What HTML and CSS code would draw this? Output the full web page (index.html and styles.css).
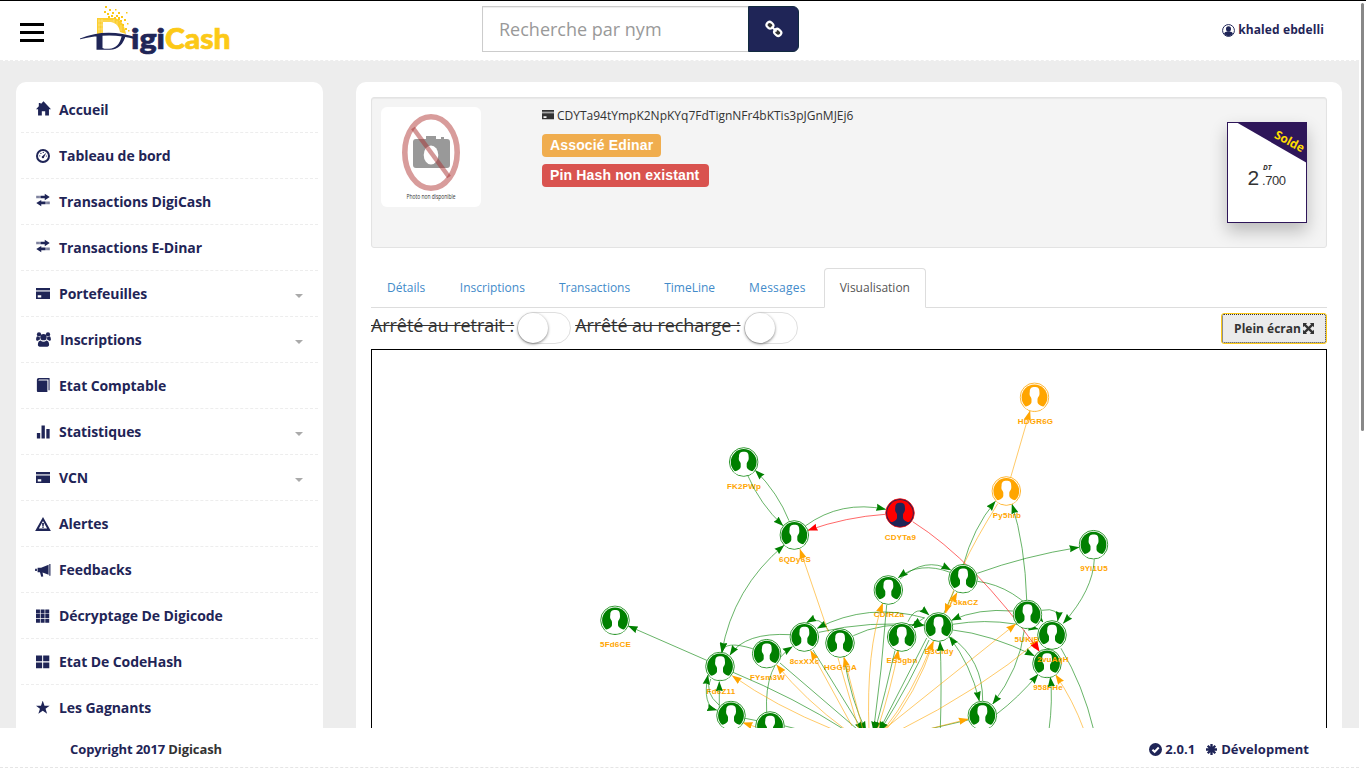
FILE: index.html
```html
<!DOCTYPE html>
<html lang="fr">
<head>
<meta charset="utf-8">
<title>DigiCash</title>
<link rel="stylesheet" href="styles.css">
</head>
<body>
<svg class="defs" width="0" height="0" aria-hidden="true">
  <symbol id="i-home" viewBox="0 0 16 16"><path d="M8 .3 16 8.700H13.800v6.800H9.800v-4.500H6.200v4.500H2.200V8.700H0L3 5.600V2h2v1.500z"/></symbol>
  <symbol id="i-dash" viewBox="0 0 16 16"><path fill-rule="evenodd" d="M8 0a8 8 0 1 0 0 16A8 8 0 0 0 8 0zm0 2.300a5.700 5.700 0 1 1 0 11.400A5.700 5.700 0 0 1 8 2.300z"/><path d="M11.800 4.200 9.300 9.200a1.400 1.400 0 1 1-1.800-1.300z"/><circle cx="4.300" cy="7.800" r=".7"/><circle cx="5.600" cy="5" r=".7"/><circle cx="8.300" cy="3.900" r=".7"/><circle cx="11.900" cy="8" r=".7"/></symbol>
  <symbol id="i-transfer" viewBox="0 0 16 16"><path d="M5 3h5V.8L15.700 4.500 10 8.200V6H5zM2.800 3h1.200v3H2.800zM.6 3h1.200v3H.6zM11 9.800H6V8L.3 11.400 6 15v-2.200h5zM12 9.800h1.200v3H12zM14.200 9.800h1.200v3h-1.200z"/></symbol>
  <symbol id="i-card" viewBox="0 0 16 16"><path fill-rule="evenodd" d="M0 1.200h16v2.300H0zM0 5.500h16v8.300H0zM2 9.500v2.600h4V9.500z"/><path opacity=".4" d="M0 3.500h16v2H0z"/></symbol>
  <symbol id="i-users" viewBox="0 0 16 16"><circle cx="8" cy="5.500" r="3.400"/><circle cx="3.200" cy="2.600" r="2.300"/><circle cx="12.800" cy="2.600" r="2.300"/><path d="M5 9a4 4 0 0 0 6 0c2 .3 3 2 3 4.700 0 1.200-.8 2-2 2H4c-1.200 0-2-.8-2-2C2 11 3 9.300 5 9zM.1 8.200c0-2 .5-3.600 1.600-3.600.8.600 1.600.8 2.400.600-.2 1.200.1 2.100.7 2.900-1.200 0-2 .4-2.700 1.200C1 9.300.1 9.200.1 8.200zM15.900 8.200c0-2-.5-3.600-1.600-3.600-.8.600-1.600.8-2.400.600.2 1.200-.1 2.100-.7 2.900 1.200 0 2 .4 2.700 1.200 1.100 0 2-.1 2-1.100z"/></symbol>
  <symbol id="i-book" viewBox="0 0 16 16"><path d="M3 0h12.500v14h-1.200V1.600H3.600L2.500 2.800h10.500V16H2.500C1.500 16 1 15.400 1 14.500V2.300C1 1 1.800 0 3 0z"/></symbol>
  <symbol id="i-stats" viewBox="0 0 16 16"><path d="M1 9h3.800v6.500H1zM6.300.500h3.800v15H6.300zM11.800 4.500h3.800v11h-3.800z"/></symbol>
  <symbol id="i-alert" viewBox="0 0 18 16"><path fill-rule="evenodd" d="M9 0l9 16H0zM9 4.700 4.300 13h9.400z"/><path d="M7.900 6.800h2.200l-.3 3.500H8.200zM8 10.900h2v1.400H8z"/></symbol>
  <symbol id="i-horn" viewBox="0 0 18 16"><path d="M17.500 1v13.500h-1.300V1zM15.400 2v11.500L8.500 10.800l.8 4.500-2.300.5L5.500 10.500H2.800V5.500h4zM0 6.500h2v2.600H0z"/></symbol>
  <symbol id="i-th" viewBox="0 0 16 16"><path d="M0 .5h4.500V5H0zM5.300.500h4.500V5H5.300zM10.600.500h4.500V5h-4.500zM0 5.800h4.500v4.500H0zM5.300 5.800h4.500v4.500H5.300zM10.600 5.800h4.500v4.500h-4.500zM0 11.100h4.500v4.500H0zM5.300 11.100h4.500v4.500H5.300zM10.600 11.100h4.500v4.500h-4.500z"/></symbol>
  <symbol id="i-th2" viewBox="0 0 16 16"><path d="M0 .5h7V7H0zM8.200.500h7V7h-7zM0 8.500h7V15H0zM8.200 8.500h7V15h-7z"/></symbol>
  <symbol id="i-star" viewBox="0 0 16 16"><path d="M7.700-.5 9.700 5.400h5.900l-4.700 3.500 1.800 5.800-5-3.500-5 3.500 1.800-5.800L-.2 5.400h5.900z"/></symbol>

  <symbol id="n-head" viewBox="-15 -15 30 30">
    <circle r="14.300" fill="var(--bg,#fff)" stroke="currentColor" stroke-width=".8"/>
    <circle r="12.900" fill="currentColor"/>
    <path fill="var(--bg,#fff)" d="M-4.700-5.500C-4.700-9-3-10.200.2-10.200S5-9 4.900-5.500C5.200-3.500 4.900-2 4.300-1 3.600 0 3.200.6 3 1.600V5C3.300 7 5 7.800 7.600 9L10 9.500C7 14.500-7 14.500-10 9.500L-7.600 9C-5 7.800-3.300 7-3 5V1.600C-3.200.6-3.600 0-4.300-1-4.900-2-5.100-3.500-4.700-5.500z"/>
  </symbol>
</svg>

<div class="page">
  <div class="app">
    <header class="topbar">
      <div class="burger"><span></span><span></span><span></span></div>
      <svg class="logo" viewBox="0 0 152 52" width="152" height="52">
        <g fill="#fcc917">
          <path d="M17 13h17c6 1 10 5 12 16l-6-2c-1-6-4-9-9-10h-8v11l-6 2z" opacity=".9"/>
          <path d="M25 1h2v2h-2zM29 4h2v2h-2zM24 6h2v2h-2zM27 8h2v2h-2zM32 7h2v2h-2zM35 4h1.500v1.500H35zM38 7h2v2h-2zM36 10h2v2h-2zM41 11h2v2h-2zM31 10h2v2h-2zM46 7h1.500v1.500H46zM40 15h2v2h-2zM44 14h2v2h-2zM42 19h2v2h-2zM47 18h1.500v1.500H47zM45 23h2v2h-2zM48 25h1.500v1.500H48zM34 12h2v2h-2zM38 12h2v3h-2zM28 11h2v2h-2z"/>
        </g>
        <path d="M19 14v14M22 14v14M34 14v4M37 16v5M41 20v6M18 16h16M18 20h5M18 24h5" stroke="#fff" stroke-width=".5" opacity=".6"/>
        <path fill="#1f2557" d="M0 33.500C18 26 37 26 57 32.500L56 34.500C37 28.500 18 30 0 34.200zM16.500 29.500h6V43c2 1 5 1 9 .5 6-1.500 9-6 10.500-14h4C43.500 39.500 38 44.700 30 44.700H16.500z"/>
        <text class="logo-a" x="51" y="44" textLength="34" lengthAdjust="spacingAndGlyphs">igi</text>
        <text class="logo-b" x="85" y="44" textLength="65.500" lengthAdjust="spacingAndGlyphs">Cash</text>
      </svg>
      <div class="search">
        <div class="search-input">Recherche par nym</div>
        <div class="search-btn"><svg width="18" height="18" viewBox="0 0 18 18" fill="none" stroke="#fff" stroke-width="2.200"><rect x="1.600" y="2.200" width="7" height="6" rx="3" transform="rotate(40 5 5)"/><rect x="9" y="9.400" width="7.400" height="6" rx="3" transform="rotate(40 12.700 12.400)"/><path d="M6.500 6.500l5 5" stroke-width="1.800"/></svg></div>
      </div>
      <div class="user"><svg width="13" height="13" viewBox="0 0 16 16"><circle cx="8" cy="8" r="7.300" fill="none" stroke="currentColor" stroke-width="1.200"/><circle cx="8" cy="6" r="3.100"/><path d="M2.500 12c.6-2 2.500-2.300 4.300-3h2.400c1.800.700 3.700 1 4.300 3A7.200 7.200 0 0 1 8 15a7.200 7.200 0 0 1-5.500-3z"/></svg>khaled ebdelli</div>
    </header>

    <div class="body">
      <nav class="side">
        <div class="item"><svg class="wide"><use href="#i-home"/></svg>Accueil</div>
        <div class="item"><svg><use href="#i-dash"/></svg>Tableau de bord</div>
        <div class="item"><svg class="up"><use href="#i-transfer"/></svg>Transactions DigiCash</div>
        <div class="item"><svg class="up"><use href="#i-transfer"/></svg>Transactions E-Dinar</div>
        <div class="item"><svg><use href="#i-card"/></svg>Portefeuilles<i class="caret"></i></div>
        <div class="item"><svg class="users"><use href="#i-users"/></svg>Inscriptions<i class="caret"></i></div>
        <div class="item"><svg class="book"><use href="#i-book"/></svg>Etat Comptable</div>
        <div class="item"><svg><use href="#i-stats"/></svg>Statistiques<i class="caret"></i></div>
        <div class="item"><svg><use href="#i-card"/></svg>VCN<i class="caret"></i></div>
        <div class="item"><svg class="xl"><use href="#i-alert"/></svg>Alertes</div>
        <div class="item"><svg class="xl"><use href="#i-horn"/></svg>Feedbacks</div>
        <div class="item"><svg><use href="#i-th"/></svg>Décryptage De Digicode</div>
        <div class="item"><svg><use href="#i-th2"/></svg>Etat De CodeHash</div>
        <div class="item"><svg><use href="#i-star"/></svg>Les Gagnants</div>
      </nav>

      <main class="panel">
        <section class="well">
          <svg class="photo" width="100" height="100" viewBox="0 0 100 100">
            <rect width="100" height="100" rx="6" fill="#fff"/>
            <path fill="#999" d="M35 32h10v-3h10v3h5v-2h3v2h3a3 3 0 0 1 3 3v23a3 3 0 0 1-3 3H35a3 3 0 0 1-3-3V35a3 3 0 0 1 3-3z"/>
            <ellipse cx="50" cy="48" rx="7.300" ry="9.500" fill="#fff"/>
            <ellipse cx="50" cy="45.500" rx="26.200" ry="35.800" fill="none" stroke="#d89c9b" stroke-width="5.600"/>
            <path d="M32 21l36 49" stroke="#a83232" stroke-width="4.600" opacity=".5"/>
            <text class="photo-t" x="50" y="92" text-anchor="middle" textLength="49" lengthAdjust="spacingAndGlyphs">Photo non disponible</text>
          </svg>
          <div class="info">
            <div class="nym"><svg width="12" height="12"><use href="#i-card"/></svg>CDYTa94tYmpK2NpKYq7FdTignNFr4bKTis3pJGnMJEj6</div>
            <span class="tag warn">Associé Edinar</span>
            <span class="tag danger">Pin Hash non existant</span>
          </div>
          <svg class="card" width="80" height="101" viewBox="0 0 80 101">
            <rect x=".5" y=".5" width="79" height="100" fill="#fff" stroke="#2e1659"/>
            <path d="M9 0h71v41z" fill="#2e1659"/>
            <text class="solde" transform="translate(46.500 15.500) rotate(28)" textLength="32">Solde</text>
            <text class="int" x="20.500" y="63">2</text>
            <text class="dt" x="36" y="48">DT</text>
            <text class="dec" x="35" y="63.200" textLength="24">.700</text>
          </svg>
        </section>

        <div class="tabs">
          <div class="tab first">Détails</div><div class="tab">Inscriptions</div><div class="tab">Transactions</div><div class="tab">TimeLine</div><div class="tab msg">Messages</div><div class="tab on">Visualisation</div>
        </div>

        <div class="controls">
          <span class="strike">Arrêté au retrait :</span><span class="switch"><b></b></span>
          <span class="strike second">Arrêté au recharge :</span><span class="switch"><b></b></span>
          <div class="full"><span>Plein écran</span><svg width="11" height="11" viewBox="0 0 14 14"><path d="M0 0h5.300L3.700 1.600 7 4.900l3.300-3.300L8.700 0H14v5.300l-1.600-1.600L9.100 7l3.300 3.300L14 8.700V14H8.700l1.600-1.600L7 9.100l-3.300 3.300L5.300 14H0V8.700l1.600 1.600L4.900 7 1.600 3.700 0 5.300z"/></svg></div>
        </div>

        <div class="graph">
          <svg width="954" height="378" viewBox="372 350 954 378">
            <defs>
              <marker id="ag" class="head" viewBox="0 0 10 8" markerWidth="10" markerHeight="8" refX="9.500" refY="4" orient="auto-start-reverse" markerUnits="userSpaceOnUse"><path d="M0 .4 10 4 0 7.600 .9 4z" fill="green"/></marker>
              <marker id="ao" class="head" viewBox="0 0 10 8" markerWidth="10" markerHeight="8" refX="9.500" refY="4" orient="auto-start-reverse" markerUnits="userSpaceOnUse"><path d="M0 .4 10 4 0 7.600 .9 4z" fill="orange"/></marker>
              <marker id="ar" class="head" viewBox="0 0 10 8" markerWidth="10" markerHeight="8" refX="9.500" refY="4" orient="auto" markerUnits="userSpaceOnUse"><path d="M0 .4 10 4 0 7.600 .9 4z" fill="red"/></marker>
            </defs>
            <g class="labels">
              <text x="744" y="489">FK2PWp</text><text x="795" y="562">6QDy6S</text><text x="615.500" y="647">5Fd6CE</text>
              <text x="721" y="694">Fd6Z11</text><text x="767.500" y="680">FYsm3W</text><text x="804.500" y="663.700">8cxXXc</text>
              <text x="840.500" y="670">HGGfgA</text><text x="900.500" y="540">CDYTa9</text><text x="889" y="617">CDfRZa</text>
              <text x="963.500" y="605">75kaCZ</text><text x="902" y="663">ES5gbn</text><text x="939" y="654">B3Cfdy</text>
              <text x="1035.500" y="424">HDGR6G</text><text x="1007" y="518">Py5hrb</text><text x="1094" y="571">9Yi1U5</text>
              <text x="1028.500" y="642">5UKiPr</text><text x="1048" y="690">958FHe</text>
            </g>
            <g class="edge g">
              <path d="M748 476Q760 504 783 525.700"/><path d="M789 520.700Q778 493 755.300 470.300"/>
              <path class="both" d="M721.700 652.700Q733 588 784 545.300"/><path d="M706.700 660.300 628.300 626"/>
              <path d="M805.700 525.700Q841 500 885.700 509.300"/><path d="M963 566Q973 528 995.300 501.300"/>
              <path d="M1026.700 600Q1025 545 1012 504.300"/><path d="M977.300 573.300Q1025 556 1079 547.300"/>
              <path d="M1094.300 559.300Q1093 590 1063.300 623.300"/><path d="M977.300 581.300Q1015 586 1043 622"/>
              <path d="M1041.700 610.300Q1060 607 1057.700 621"/><path d="M1013 611Q978 608 951.700 620.300"/>
              <path d="M952.700 624.300Q985 619 1015 624L1038 629"/><path d="M952.700 630Q990 634 1034.300 655.700"/>
              <path d="M1024.300 630Q1020 668 992.700 704"/><path d="M996.700 714Q1018 698 1038 674.300"/>
              <path d="M1049 730Q1053 700 1050.300 677.300"/><path class="plain" d="M1061 648.300Q1083 685 1093.700 730"/>
              <path class="both" d="M949.300 636.700Q971 665 979.300 701"/><path class="plain" d="M951 637Q983 660 982.700 701"/>
              <path d="M940.300 730Q942 680 940 641.700"/><path class="plain" d="M925 730 968 720"/>
              <path d="M926.700 638 879 731"/><path d="M929 640Q912 680 880 731"/>
              <path d="M895 650.700Q886 690 875 731"/><path d="M886.700 605Q882 670 873.500 731"/>
              <path d="M900 579Q925 556 950.700 570"/><path d="M950 572.300Q920 561 898.300 577.700"/>
              <path d="M925 618Q868 602 817.300 628.300"/><path d="M819 632.300Q870 620 923.300 625.700"/>
              <path d="M853.300 635.700Q880 622 924 625"/><path d="M908 621.700Q916 604 929 615"/><path d="M924 618 912 626"/>
              <path d="M829 631Q820 615 806.700 622.500"/><path d="M790.700 634.700Q745 632 730 655"/>
              <path d="M752.700 648.700Q724 640 722.300 652"/><path d="M766.700 712.700Q764 665 792.300 646.700"/>
              <path d="M719.300 710V681.700"/><path class="both" d="M708 675Q702 706 716.700 710"/><path class="plain" d="M710.700 679Q704 692 719 705"/>
              <path class="plain" d="M745 718.300 757 720.700"/><path class="plain" d="M785 726 797 729"/>
              <path class="plain" d="M733 672.300Q795 698 845 730"/><path class="plain" d="M780 663 857 729"/>
              <path d="M813 650 863 731"/><path d="M844 658Q851 700 866 731"/><path class="plain" d="M954 591 944 613"/>
            </g>
            <g class="edge o">
              <path d="M828.300 632.300 800 549.300"/><path d="M997.700 503.700Q975 540 963 566L945 613"/>
              <path d="M1010.700 477.300 1030 411"/><path d="M1084 730Q1073 700 1055.700 675"/>
              <path d="M882 731 1015.700 624"/><path d="M898 731Q980 690 1039 640"/><path d="M925 730 968.300 719"/>
              <path d="M883 731Q912 695 933.300 641.300"/><path class="plain" d="M885 731Q916 695 934 641"/>
              <path d="M877 731Q892 685 898.300 650"/><path d="M869 731Q866 650 882.700 603.300"/>
              <path d="M946 613 957 592.700"/><path d="M762 729 743 722.700"/><path d="M832 729Q775 706 732.300 675.700"/>
              <path d="M846 730Q805 700 776.700 665"/><path d="M852 726 810.700 650.700"/><path d="M863 730 844 657.300"/><path class="plain" d="M859 730 838 658"/>
            </g>
            <g class="edge r"><path d="M885.300 514.300Q846 517 808 530.300"/><path d="M912.700 521.700Q975 561 1039 651"/></g>
            <g class="nodes">
              <use href="#n-head" x="728.700" y="447" width="30" height="30"/><use href="#n-head" x="779.300" y="520" width="30" height="30"/>
              <use href="#n-head" x="600" y="605.300" width="30" height="30"/><use href="#n-head" x="705" y="651.500" width="30" height="30"/>
              <use href="#n-head" x="751.700" y="638.700" width="30" height="30"/><use href="#n-head" x="789.300" y="622" width="30" height="30"/>
              <use href="#n-head" x="825" y="628" width="30" height="30"/><use href="#n-head" x="716" y="700.500" width="30" height="30"/>
              <use href="#n-head" x="755" y="711" width="30" height="30"/><use href="#n-head" x="873.300" y="575" width="30" height="30"/>
              <use href="#n-head" x="948" y="563.700" width="30" height="30"/><use href="#n-head" x="886.700" y="622" width="30" height="30"/>
              <use href="#n-head" x="923.500" y="612" width="30" height="30"/><use href="#n-head" x="1078.500" y="529.700" width="30" height="30"/>
              <use href="#n-head" x="1012.500" y="599.500" width="30" height="30"/><use href="#n-head" x="1032" y="648.500" width="30" height="30"/>
              <use href="#n-head" x="1037" y="620" width="30" height="30"/><use href="#n-head" x="967.300" y="700.500" width="30" height="30"/>
              <use class="org" href="#n-head" x="1019.500" y="382.300" width="30" height="30"/><use class="org" href="#n-head" x="991.300" y="476" width="30" height="30"/>
              <use class="red" href="#n-head" x="885" y="498" width="30" height="30"/>
            </g>
            <g class="labels"><text x="1053" y="662">2vuAqH</text></g>
            <path d="M1032 645.500l7.500 6-2-9.500z" fill="red"/>
          </svg>
        </div>
      </main>
    </div>

    <footer class="foot">
      <div>Copyright 2017 <span class="dark">Digicash</span></div>
      <div class="ver">
        <svg width="13" height="13" viewBox="0 0 16 16"><circle cx="8" cy="8" r="8"/><path d="M4.200 8.200 7 10.800l5-5.300" fill="none" stroke="#fff" stroke-width="2.400"/></svg><span>2.0.1</span>
        <svg class="ast" width="11" height="11" viewBox="-8 -8 16 16" stroke="currentColor" stroke-width="3.400"><path d="M0-8V8M-8 0H8M-5.500-5.500l11 11M5.500-5.500l-11 11"/></svg><span>Dévelopment</span>
      </div>
    </footer>
  </div>
  <div class="scroll"><div class="thumb"></div></div>
</div>
</body>
</html>
```
FILE: styles.css
```css
* { box-sizing: border-box; }
body { margin: 0; font-family: "Open Sans", sans-serif; color: #333; background: #fff; overflow: hidden; }
.defs { display: block; }
.page { display: flex; height: 768px; border-top: 1px solid #000; }
.app { width: 1359px; display: flex; flex-direction: column; }
.scroll { width: 7px; padding: 2px 2px 0; }
.thumb { height: 428px; width: 3px; background: #888; border-radius: 2px; }

.topbar { height: 60px; flex: none; display: flex; align-items: flex-start; border-bottom: 1px dashed #ededed; }
.burger { margin: 22px 0 0 20px; width: 24px; display: flex; flex-direction: column; gap: 5px; }
.burger span { height: 3px; background: #000; }
.logo { margin: 4px 0 0 36px; overflow: visible; }
.logo text { font: 900 29px Lato, sans-serif; stroke-width: .7; }
.logo-a { fill: #1f2557; stroke: #1f2557; }
.logo-b { fill: #fcc917; stroke: #fcc917; }
.search { display: flex; margin: 5px 0 0 250px; width: 317px; height: 46px; }
.search-input { width: 266px; border: 1px solid #ccc; border-right: 0; padding-left: 16px; font-size: 18px; line-height: 45px; color: #999; box-shadow: inset 0 1px 1px rgba(0,0,0,.075); }
.search-btn { width: 51px; background: #1f2557; border: 1px solid #122b40; border-radius: 0 6px 6px 0; display: flex; align-items: center; justify-content: center; }
.user { margin: 20px 35px 0 auto; display: flex; align-items: center; gap: 3px; font-size: 12px; line-height: 18px; font-weight: 700; letter-spacing: .1px; color: #1f2557; }
svg { flex: none; fill: currentColor; }

.body { flex: 1; min-height: 0; overflow: hidden; background: #ededed; display: flex; align-items: flex-start; gap: 33px; padding: 21px 17px 0 16px; }
.side { width: 307px; height: 700px; background: #fff; border-radius: 10px 10px 0 0; padding: 5px; }
.item { height: 46px; border-bottom: 1px dashed #ededed; display: flex; align-items: center; gap: 9px; padding: 0 15px; font-size: 14px; font-weight: 700; letter-spacing: -.08px; color: #1f2557; }
.item svg { width: 14px; height: 14px; overflow: visible; }
.item .wide { width: 15px; height: 15px; margin: -2px -1px 0 0; }
.item .users { width: 15px; height: 15px; }
.item .xl { width: 16px; height: 14px; margin: 0 -1px; }
.item .up { margin-top: -3px; }
.item .book { margin-top: -1px; }
.caret { margin: 4px 0 0 auto; border: 4px solid transparent; border-top-color: #aaa; border-bottom: 0; }

.panel { width: 986px; height: 700px; background: #fff; border-radius: 10px 10px 0 0; padding: 15px 15px 0; }
.well { height: 151px; background: #f4f4f4; border: 1px solid #e3e3e3; border-radius: 3px; box-shadow: inset 0 1px 1px rgba(0,0,0,.05); display: flex; align-items: flex-start; padding: 9px 19px 0 9px; }
.photo-t { font: 6.500px "Open Sans", sans-serif; fill: #333; }
.info { margin-left: 61px; display: flex; flex-direction: column; align-items: flex-start; }
.nym { display: flex; align-items: center; gap: 3px; font-size: 12px; line-height: 17px; margin-bottom: 10px; }
.nym svg { margin-top: -1px; }
.tag { height: 23px; margin-bottom: 7px; padding: 0 8px; border-radius: 4px; font: 700 14px/22px "Liberation Sans", sans-serif; letter-spacing: .15px; white-space: nowrap; color: #fff; }
.warn { background: #f0ad4e; width: 119px; }
.danger { background: #d9534f; width: 167px; }
.card { margin: 15px 0 0 auto; box-shadow: 0 8px 16px rgba(0,0,0,.24); }
.solde { font: 700 12px "Open Sans", sans-serif; fill: #fd0; }
.int { font: 21px "Liberation Sans", sans-serif; fill: #333; }
.dec { font: 13px "Liberation Sans", sans-serif; fill: #333; }
.dt { font: italic 700 7px "Open Sans", sans-serif; fill: #333; }

.tabs { margin-top: 20px; height: 40px; border-bottom: 1px solid #ddd; display: flex; gap: 2px; }
.tab { height: 40px; padding: 0 15px; border: 1px solid transparent; border-radius: 4px 4px 0 0; font-size: 12px; line-height: 37px; color: #428bca; }
.tab.first { padding-right: 15.700px; }
.tab.msg { letter-spacing: .25px; }
.tab.on { color: #555; background: #fff; border-color: #ddd #ddd #fff; }
.controls { height: 41px; display: flex; align-items: flex-start; padding-top: 4px; }
.strike { font-size: 18px; line-height: 26px; letter-spacing: -.08px; text-decoration: line-through; }
.second { margin-left: 4px; }
.switch { width: 54px; height: 32px; margin-left: 3px; border: 1px solid #dfdfdf; border-radius: 16px; }
.switch b { display: block; width: 30px; height: 30px; border-radius: 50%; background: #fff; box-shadow: 0 1px 3px rgba(0,0,0,.5); }
.full { margin: 1px 0 0 auto; width: 106px; height: 31px; background: #ebebeb; border: 1px solid #fcc917; border-radius: 3px; outline: 1px dotted #333; outline-offset: -2px; display: flex; align-items: center; justify-content: center; gap: 2px; font-size: 12px; font-weight: 700; }
.graph { border: 1px solid #000; border-bottom: 0; height: 400px; }
.graph > svg { display: block; }

.labels text { font: 700 8px "Liberation Sans", sans-serif; fill: orange; text-anchor: middle; letter-spacing: .2px; }
.edge path { fill: none; stroke-width: .7; stroke-opacity: .85; }
.edge.g { stroke: green; }
.edge.g path { marker-end: url(#ag); }
.edge.g .both { marker-start: url(#ag); }
.edge.o { stroke: orange; }
.edge.o path { marker-end: url(#ao); }
.edge.r { stroke: red; }
.edge.r path { marker-end: url(#ar); }
.edge.g .plain, .edge.o .plain { marker-end: none; }
.head path { stroke: none; marker: none; }
.nodes { color: green; }
.org { color: orange; }
.red { color: red; --bg: #1f2557; }

.foot { height: 40px; flex: none; border-bottom: 1px dashed #e5e5e5; display: flex; align-items: center; justify-content: space-between; padding: 3px 50px 0 70px; font-size: 13px; font-weight: 700; letter-spacing: -.1px; color: #1f2557; }
.dark { color: #333; }
.ver { display: flex; align-items: center; gap: 3px; letter-spacing: .05px; }
.ast { margin: 0 1px 0 8px; }
```
